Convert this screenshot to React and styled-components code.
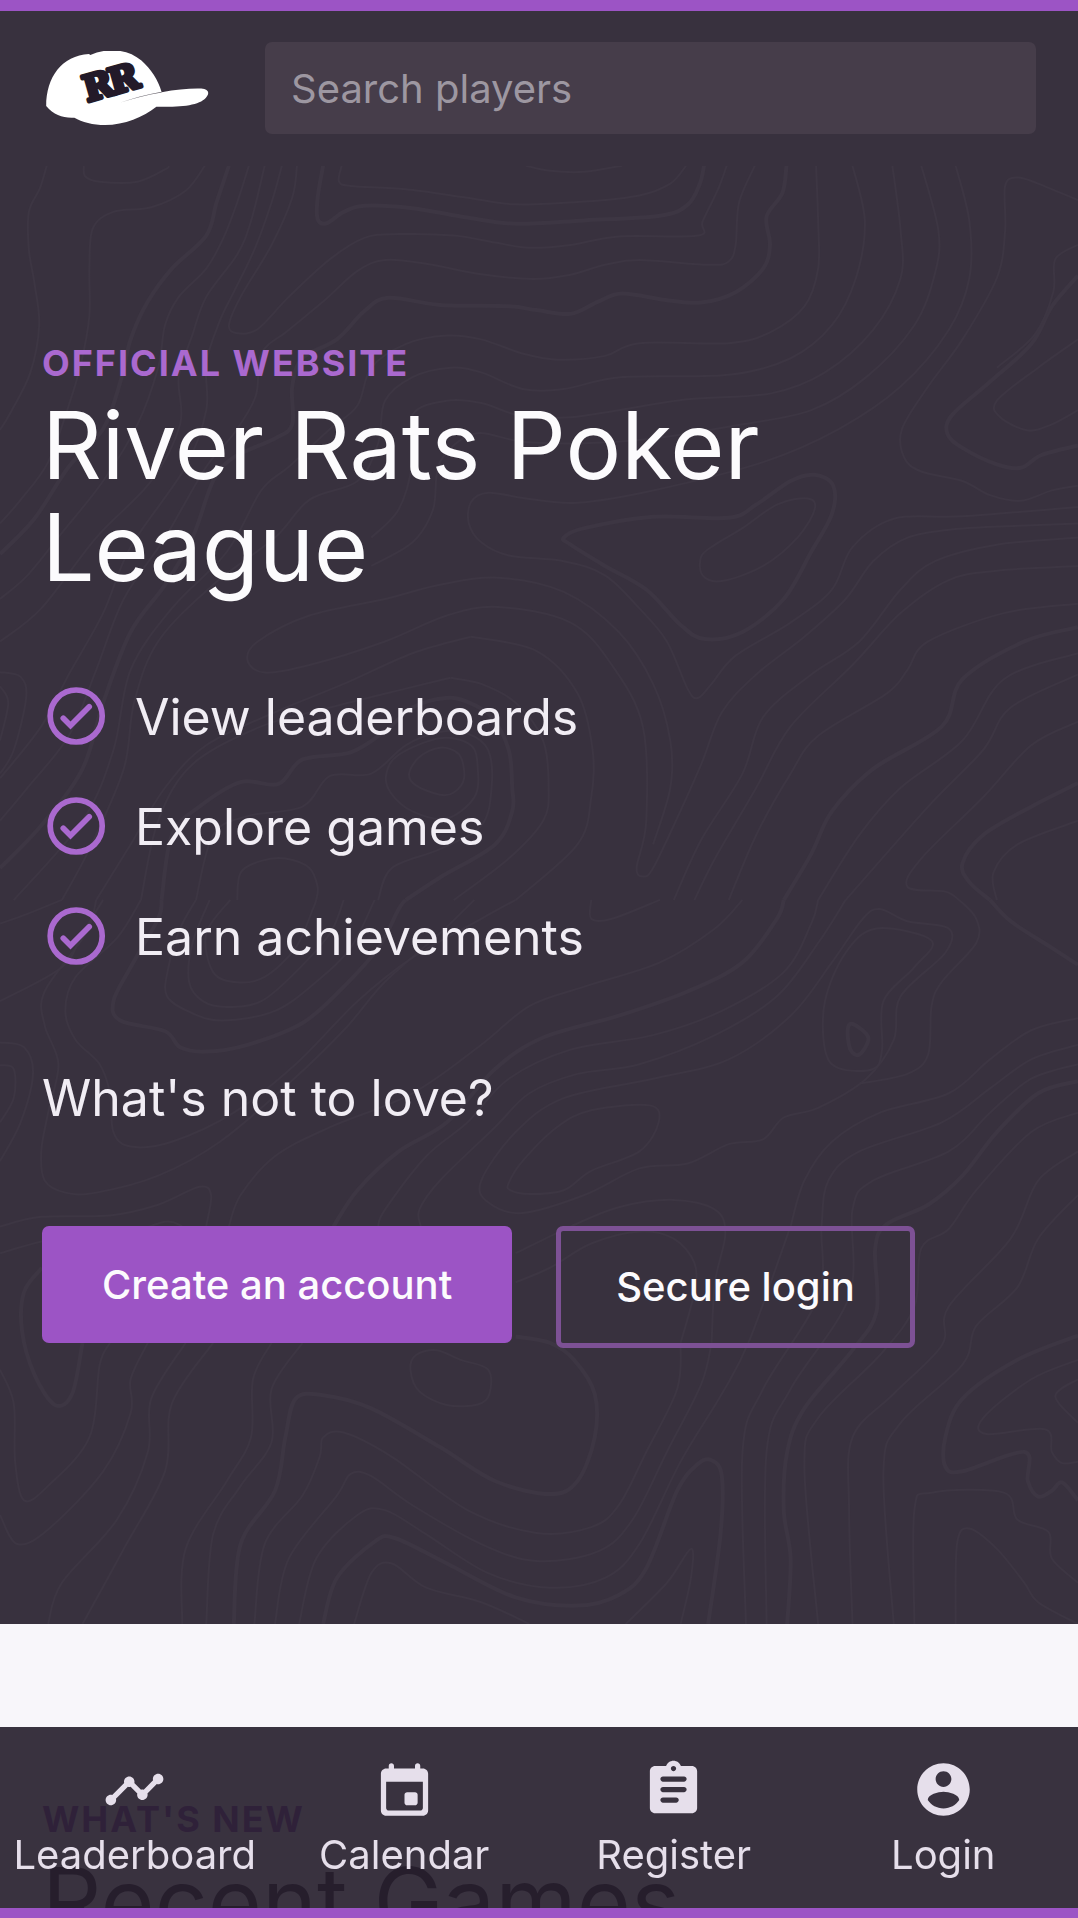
import React from "react";
import styled, { createGlobalStyle } from "styled-components";

const color = {
  ink: "#38313e",
  line: "#3d3643",
  accent: "#9c54c5",
  accentSoft: "#aa69cf",
  outline: "#7d5195",
  field: "#463d4a",
  paper: "#f8f6fa",
};

const GlobalStyle = createGlobalStyle`
  *, *::before, *::after { box-sizing: border-box; }
  body { margin: 0; background: ${color.ink}; }
  h1, h2, p, ul { margin: 0; padding: 0; font-weight: 400; }
  a { color: inherit; text-decoration: none; }
`;

const Shell = styled.div`
  height: 100vh;
  overflow-y: auto;
  scrollbar-width: none;
  border-top: 11px solid ${color.accent};
  background: ${color.ink};
  color: #fcfbfd;
  font-family: Inter, Roboto, sans-serif;
  font-size: 40px;
  line-height: 50px;
`;

const Header = styled.header`
  display: flex;
  align-items: center;
  gap: 56px;
  padding: 31px 42px 32px;
`;

const LogoLink = styled.a`
  display: block;
  flex: none;
  padding-left: 4px;
  svg { display: block; }
`;

const SearchForm = styled.form`
  flex: 1;
  min-width: 0;
`;

const SearchInput = styled.input`
  display: block;
  width: 100%;
  height: 92px;
  padding: 0 26px;
  border: 0;
  border-radius: 7px;
  background: ${color.field};
  color: #fcfbfd;
  font: inherit;
  &::placeholder { color: #9d97a1; opacity: 1; }
`;

const Hero = styled.section`
  position: relative;
  padding: 166px 42px 276px;
`;

const Contours = styled.svg`
  position: absolute;
  inset: 0;
  width: 100%;
  height: 100%;
  fill: none;
  stroke: ${color.line};
`;

const HeroBody = styled.div`
  position: relative;
  display: flex;
  flex-direction: column;
  align-items: flex-start;
  gap: 94px;
  color: #f1edf4;
`;

const Intro = styled.div`
  display: flex;
  flex-direction: column;
  gap: 85px;
`;

const Eyebrow = styled.p`
  color: ${(p) => p.$tone};
  font-size: 36px;
  font-weight: 700;
  line-height: 62px;
  letter-spacing: 2px;
  text-transform: uppercase;
`;

const Title = styled.h1`
  color: ${(p) => p.$tone};
  font-size: 93px;
  line-height: 102px;
`;

const Perks = styled.ul`
  display: flex;
  flex-direction: column;
  gap: 42px;
  list-style: none;
`;

const Perk = styled.li`
  display: flex;
  align-items: center;
  gap: 25px;
  font-size: 50px;
  line-height: 68px;
  svg { flex: none; }
`;

const Lead = styled.p`
  font-size: 50px;
  line-height: 67px;
`;

const Actions = styled.div`
  display: flex;
  align-items: flex-start;
  gap: 44px;
`;

const Button = styled.button`
  padding: ${(p) => (p.$outlined ? "31px 55px" : "34px 60px 33px")};
  border: ${(p) => (p.$outlined ? `5px solid ${color.outline}` : "0")};
  border-radius: 7px;
  background: ${(p) => (p.$outlined ? "transparent" : color.accent)};
  color: #fcfbfd;
  font: inherit;
  font-weight: 500;
  white-space: nowrap;
`;

const News = styled.section`
  padding: 164px 42px;
  background: ${color.paper};
`;

const Nav = styled.nav`
  position: fixed;
  inset: auto 0 0;
  display: grid;
  grid-template-columns: repeat(4, 1fr);
  border-bottom: 10px solid ${color.accent};
  background: rgba(38, 31, 45, 0.915);
  background-clip: padding-box;
  color: #e6dfeb;
`;

const NavLink = styled.a`
  display: flex;
  flex-direction: column;
  align-items: center;
  gap: 9px;
  padding: 31px 0 28px;
`;

/* Each contour is a list of x,y pairs; "!" in front marks a heavy index line,
   "o" at the end closes the ring. */
const upperContours = `
68,12 58,60 42,110 42,190 50,260 57,350 44,451 15,536 0,572
122,12 124,35 145,46 200,46 240,20 246,12
298,12 270,65 220,100 165,110 135,145 130,230 130,330 118,430 100,520 70,640 30,720 0,770
!333,12 315,90 300,160 250,230 215,300 190,380 175,470 150,570 100,650 50,760 0,835
362,12 345,90 325,165 300,230 260,290 240,350 230,440 200,560 150,680 90,790 40,880 0,930
385,12 365,130 345,200 300,290 280,370 260,460 262,560 220,680 140,800 60,950 0,1020
410,12 395,90 370,190 340,280 320,340 300,430 300,530 270,650 190,820 150,960 100,1090 60,1200 0,1310
432,12 425,80 395,180 350,290 333,350 345,367 375,358 420,290 480,210 530,165 580,157 660,160 720,175 770,186 830,180 900,162 1015,160 1022,130 1045,60 1057,12
!470,12 462,80 462,125 475,134 500,110 530,97 600,102 680,122 750,135 850,128 960,118 1000,95 1018,50 1024,12
497,12 493,45 510,55 590,62 680,80 750,94 850,88 930,75 975,50 998,12
765,12 800,23 850,25 905,12
1098,12 1075,90 1070,180 1060,215 1030,222 930,212 880,222 830,243 775,252 700,242 620,220 560,212 520,235 470,300 420,360 380,410 372,500 340,580 300,650 240,800 180,930 140,1080 100,1220 40,1330 0,1400
!1144,12 1138,70 1115,120 1120,180 1110,230 1070,280 1020,302 970,297 905,283 870,300 830,326 780,318 740,310 640,307 565,292 530,320 490,380 440,420 425,480 425,560 400,590 340,630 310,680 280,800 240,900 190,1000 150,1150 120,1290 60,1410 0,1500
1187,12 1190,130 1190,230 1170,310 1120,365 1060,388 930,388 880,415 810,423 760,410 700,380 650,372 590,390 540,440 520,520 480,570 420,650 380,700 330,830 250,950 190,1080 165,1250 120,1400 20,1568
1240,12 1258,130 1245,250 1210,350 1150,420 1060,455 905,460 820,485 760,485 700,450 655,440 600,460 560,510 550,600 520,680 450,720 400,800 310,900 230,1020 195,1150 180,1290 130,1460 90,1568
1298,12 1310,150 1310,250 1270,360 1200,450 1120,495 1000,507 900,530 830,545 760,543 700,515 650,510 600,540 600,640 580,740 540,800
1340,12 1365,150 1360,240 1330,350 1260,460 1180,530 1080,560 950,590 850,600 760,597 690,580 640,640 630,740 600,810 540,860
1390,12 1410,130 1410,250 1380,360 1310,480 1220,570 1110,640 950,700 840,726 770,718 710,705 685,725 682,770 700,810 740,838 820,850 880,880 930,950 970,1020 1000,1120 1015,1140 1035,1110 1070,1050 1150,980 1210,910 1240,820 1300,760 1400,755 1568,735
!820,800 850,780 950,756 1060,758 1100,730 1150,680 1185,667 1212,690 1210,750 1180,830 1140,930 1080,1000 1025,1015 990,985 940,910 880,860 830,815 o
1020,840 1040,815 1080,780 1130,730 1175,717 1185,740 1160,800 1110,860 1050,892 1022,880 o
1568,85 1510,50 1480,37 1462,55 1462,150 1450,250 1400,380 1350,480 1312,570 1315,630 1340,660 1400,680 1440,710 1485,722 1530,700 1568,690
!1568,245 1530,310 1500,390 1440,470 1385,540 1378,580 1400,610 1450,645 1485,652 1515,625 1568,605
1568,180 1535,210 1532,280 1505,370 1450,440
1568,380 1510,440 1450,510 1455,545 1495,573 1530,560 1568,530
1568,770 1480,775 1390,782 1320,800 1270,850 1230,930 1170,1010 1100,1090 1050,1170 1020,1280 980,1410 950,1500 937,1518 926,1500 940,1400 935,1200 890,1070 830,980 725,947 650,965 560,1020 450,1070 385,1086 360,1060 375,1020 450,965 560,930 640,900 725,885 820,915 900,1000 950,1110 975,1230 975,1330 950,1450
685,1010 600,1045 500,1110 400,1170 300,1240 240,1330 190,1450 140,1568
685,1010 780,1040 840,1130 862,1250 860,1350 840,1450 750,1568
655,1097 590,1120 480,1160 380,1200 280,1280 230,1400 205,1568
655,1097 700,1110 750,1150 790,1230 798,1330 790,1400 740,1480 660,1568
!590,1568 640,1520 720,1450 745,1380 745,1330 740,1250 715,1180 680,1148 648,1140 600,1160 560,1210 510,1255 440,1270 405,1322 350,1318 290,1370 250,1430 235,1568
550,1568 570,1500 640,1460 700,1410 715,1330 710,1250 680,1215 640,1212 590,1240 540,1300 480,1305 440,1370 360,1390 310,1430 285,1568
595,1300 610,1265 640,1245 668,1260 675,1310 660,1340 640,1345 605,1325 o
562,1300 580,1260 640,1225 685,1240 695,1290 690,1350 650,1395 600,1380 568,1340 o
345,1568 350,1510 380,1485 415,1480 450,1500 462,1540 460,1568
0,1085 30,1095 38,1140 20,1250 0,1300
0,1115 12,1150 0,1230
1568,800 1450,815 1360,850 1310,910 1250,1020 1180,1090 1110,1180 1080,1300 1020,1440 980,1568
1568,860 1450,870 1380,890 1310,960 1240,1070 1150,1200 1100,1330 1040,1480 1010,1568
1568,940 1460,960 1350,1020 1320,1080 1290,1130 1190,1220 1150,1300 1100,1430 1060,1568
!1568,990 1490,1020 1400,1100 1370,1200 1270,1290 1210,1380 1180,1470 1140,1568
1568,1045 1460,1100 1400,1230 1310,1330 1250,1430 1190,1568
1568,1090 1470,1160 1430,1250 1350,1370 1230,1568
!1568,1320 1500,1370 1430,1430 1400,1490 1410,1530 1440,1568
1568,1400 1480,1450 1445,1510 1450,1568
1568,1190 1500,1240 1430,1350 1340,1480 1320,1540 1375,1550 1395,1568`;

const lowerContours = `
!235,41 230,80 190,180 165,250 175,290 240,312 262,345 300,354 360,340 440,295 500,220 550,140 580,60 590,41
285,41 262,100 245,180 243,240 280,275 325,290 400,270 460,210 510,140 545,41
305,41 280,130 275,210 295,250 330,262 380,250 430,190 480,110 500,41
335,41 300,110 310,190 345,211 385,200 430,140 455,60 460,41
140,41 125,110 65,230 65,300 85,380 70,480 60,560 65,620 95,645 140,645 230,610 320,540 420,420 500,310 560,210 640,110 690,41
205,41 170,120 110,200 95,270 110,330 145,380 160,440 165,520 190,550 250,540 340,480 430,380 520,250 600,160 700,80 750,41
0,250 90,180 120,110 150,41
0,90 40,70 90,41
0,335 35,345 48,400 30,500 0,580
0,382 20,390 20,450 0,500
!1140,41 1130,80 1080,170 1000,230 900,280 790,325 720,390 650,500 580,560 520,640 485,715
1080,41 1040,100 960,170 850,220 770,260 700,340 600,440 480,510 400,570 350,650 333,714
1190,41 1180,90 1140,190 1050,270 950,320 830,350 740,410 680,500 620,570 560,680 550,714
1230,41 1190,130 1130,240 1040,320 930,380 840,400 770,440 720,510 640,620 610,680 612,714
740,625 760,580 810,510 860,475 945,465 958,500 930,560 860,600 820,640 770,648 742,640 o
1280,60 1320,85 1380,100 1375,150 1310,240 1300,330 1260,410 1190,470 1140,490 1110,535 1060,545 1000,585 930,595 850,650 760,687 710,665 700,620 750,520 820,450 950,410 1060,370 1150,280 1210,170 1255,80 o
1275,100 1355,125 1330,180 1285,250 1283,350 1270,390 1220,388 1200,350 1200,250 1230,150 o
!1233,310 1240,297 1263,325 1250,360 1237,350 o
0,715 60,695 160,692 230,670 290,633 307,650 300,714
0,770 80,740 180,730 240,705 265,714
!61,800 35,850 32,930 50,1020 80,1083 105,1060 120,955
0,1010 20,1080 22,1200 35,1280 70,1250 130,1150 145,1000 160,955
0,1310 25,1370 70,1340 150,1220 190,1100 190,1030 215,955
70,1535 90,1450 170,1320 215,1180 220,1070 270,955
120,1535 180,1380 240,1220 250,1080 310,955
265,1535 270,1380 330,1240 365,1150 368,1030 395,955
300,1535 310,1350 350,1250 395,1160 395,1050 440,955
!340,1535 350,1370 400,1260 415,1150 430,1070 470,1063 540,1090 640,1170 720,1240 800,1267 840,1240 865,1150 865,1060 835,990 800,955 750,942
370,1535 385,1370 440,1270 465,1190 470,1150 500,1140 570,1190 680,1300 780,1347 860,1335 900,1290 940,1180 985,1050 990,955
400,1535 420,1400 490,1270 510,1225 540,1230 600,1290 700,1370 780,1405 870,1385 920,1320 970,1180 1020,1040 1035,955
435,1535 460,1400 520,1310 560,1300 620,1350 710,1430 800,1460 880,1440 930,1370 990,1200 1050,1060 1090,950 1150,714
!470,1535 490,1440 545,1365 575,1358 650,1410 750,1480 840,1497 900,1475 940,1420 985,1260 1015,1205 1035,1197 1050,1230 1048,1350 1030,1535
515,1535 540,1430 570,1410 620,1460 700,1490 770,1535
910,1535 970,1450 1005,1380 1005,1440 990,1535
597,1010 605,980 635,970 670,990 710,1010 712,1060 695,1082 650,1083 610,1055 o
750,830 800,800 860,750 930,725 980,740 1010,790 1010,850 990,955
750,770 830,715 900,675 980,660 1040,680 1055,730 1040,830 1035,955
!1568,415 1510,440 1450,520 1400,610 1350,670 1290,710 1273,760 1275,890 1240,970 1170,1090 1145,1180 1140,1300 1150,1400 1145,1535
1568,285 1500,310 1440,370 1380,440 1280,480 1210,540 1170,620 1150,714
1568,340 1500,370 1440,430 1370,500 1250,560 1205,620 1195,714 1190,860 1110,1050 1080,1180 1085,1535
1568,380 1500,410 1440,480 1380,560 1270,620 1240,680 1235,860 1150,1050 1115,1180 1115,1535
1568,480 1500,520 1420,640 1380,720 1340,760 1330,880 1280,980 1190,1110 1170,1210 1190,1535
1568,560 1510,620 1470,740 1380,880 1370,960 1300,1060 1240,1150 1235,1300 1240,1535
1568,650 1510,740 1480,840 1420,920 1400,1000 1310,1120 1285,1220 1300,1535
!1568,940 1480,990 1400,1070 1375,1150 1375,1210 1400,1220 1490,1180 1495,1240 1510,1272 1530,1260 1545,1243 1568,1280
1568,990 1500,1030 1430,1110 1435,1143 1520,1133 1530,1180 1545,1203 1568,1200
1568,1030 1535,1065 1568,1120
1330,1535 1330,1300 1355,1264 1460,1264 1480,1320 1525,1345 1530,1400 1568,1450
1390,1535 1392,1370 1410,1338 1450,1380 1490,1450 1510,1490 1568,1535
!1440,41 1470,85 1530,140 1568,175
1395,41 1420,80 1420,130 1370,210 1355,260 1350,360 1320,400 1250,420
860,41 860,80 890,80 960,41`;

/* Catmull-Rom spline through the points of one contour. */
function toContour(row) {
  const heavy = row.startsWith("!");
  const closed = row.endsWith("o");
  const pts = row
    .replace(/[!o]/g, "")
    .trim()
    .split(" ")
    .map((pair) => pair.split(",").map(Number));
  const n = pts.length;
  const at = (i) => (closed ? pts[(i + n) % n] : pts[Math.max(0, Math.min(n - 1, i))]);
  let d = `M${pts[0]}`;
  for (let i = 0; i < (closed ? n : n - 1); i += 1) {
    const [a, b, c, e] = [at(i - 1), at(i), at(i + 1), at(i + 2)];
    const c1 = [b[0] + (c[0] - a[0]) / 6, b[1] + (c[1] - a[1]) / 6];
    const c2 = [c[0] - (e[0] - b[0]) / 6, c[1] - (e[1] - b[1]) / 6];
    d += `C${c1} ${c2} ${c}`;
  }
  return { d, width: heavy ? 4 : 2 };
}

const parse = (rows) => rows.trim().split("\n").map(toContour);
const contourLayers = [
  { transform: "translate(0 -6) scale(.6875 .472)", lines: parse(upperContours) },
  { transform: "translate(0 714) scale(.6875 .4847)", lines: parse(lowerContours) },
];

function ContourMap() {
  return (
    <Contours viewBox="0 0 1078 1458" preserveAspectRatio="xMidYMid slice" aria-hidden="true">
      {contourLayers.map((layer) => (
        <g key={layer.transform} transform={layer.transform}>
          {layer.lines.map((line) => (
            <path key={line.d} d={line.d} strokeWidth={line.width} vectorEffect="non-scaling-stroke" />
          ))}
        </g>
      ))}
    </Contours>
  );
}

function CapLogo() {
  return (
    <svg width="163" height="75" viewBox="48 31 490 226" aria-hidden="true">
      <path
        fill="#fff"
        d="M48 197C48 110 95 45 177 40L181 43C232 20 295 25 335 60C365 87 385 118 396 155C440 147 480 143 515 144C536 146 541 156 532 168C515 194 460 201 380 199C340 230 285 254 225 254C190 254 155 245 133 232C100 234 72 225 48 197Z"
      />
      <path fill="#625d66" d="M270 187C310 173 350 163 396 154L396 156C350 164 310 174 270 187Z" />
      <text
        transform="translate(172 185) rotate(-16)"
        fontFamily="DejaVu Serif, serif"
        fontWeight="700"
        fontSize="108"
        letterSpacing="-10"
        fill="#231a29"
        stroke="#231a29"
        strokeWidth="12"
        strokeLinejoin="round"
      >
        RR
      </text>
    </svg>
  );
}

function CheckIcon() {
  return (
    <svg width="68" height="68" viewBox="0 0 68 68" fill="none" stroke={color.accentSoft} strokeWidth="5.7" aria-hidden="true">
      <circle cx="34.2" cy="33" r="26" />
      <path d="M21.3 35.3L28.5 42.5L47.2 23.8" strokeLinecap="round" />
    </svg>
  );
}

const perks = ["View leaderboards", "Explore games", "Earn achievements"];

const navItems = [
  {
    label: "Leaderboard",
    path: "M23 8c0 1.1-.9 2-2 2-.18 0-.35-.02-.51-.07l-3.56 3.55c.05.16.07.34.07.52 0 1.1-.9 2-2 2s-2-.9-2-2c0-.18.02-.36.07-.52l-2.55-2.55c-.16.05-.34.07-.52.07s-.36-.02-.52-.07l-4.55 4.56c.05.16.07.33.07.51 0 1.1-.9 2-2 2s-2-.9-2-2 .9-2 2-2c.18 0 .35.02.51.07l4.56-4.55C8.02 9.36 8 9.18 8 9c0-1.1.9-2 2-2s2 .9 2 2c0 .18-.02.36-.07.52l2.55 2.55c.16-.05.34-.07.52-.07s.36.02.52.07l3.55-3.56C19.02 8.35 19 8.18 19 8c0-1.1.9-2 2-2s2 .9 2 2z",
  },
  {
    label: "Calendar",
    path: "M16 13h-3c-.55 0-1 .45-1 1v3c0 .55.45 1 1 1h3c.55 0 1-.45 1-1v-3c0-.55-.45-1-1-1zm0-10v1H8V3c0-.55-.45-1-1-1s-1 .45-1 1v1H5c-1.11 0-1.99.9-1.99 2L3 20c0 1.1.89 2 2 2h14c1.1 0 2-.9 2-2V6c0-1.1-.9-2-2-2h-1V3c0-.55-.45-1-1-1s-1 .45-1 1zm2 17H6c-.55 0-1-.45-1-1V9h14v10c0 .55-.45 1-1 1z",
  },
  {
    label: "Register",
    path: "M19 3h-4.18C14.4 1.84 13.3 1 12 1s-2.4.84-2.82 2H5c-1.1 0-2 .9-2 2v14c0 1.1.9 2 2 2h14c1.1 0 2-.9 2-2V5c0-1.1-.9-2-2-2zm-7 0c.55 0 1 .45 1 1s-.45 1-1 1-1-.45-1-1 .45-1 1-1zm1 14H8c-.55 0-1-.45-1-1s.45-1 1-1h5c.55 0 1 .45 1 1s-.45 1-1 1zm3-4H8c-.55 0-1-.45-1-1s.45-1 1-1h8c.55 0 1 .45 1 1s-.45 1-1 1zm0-4H8c-.55 0-1-.45-1-1s.45-1 1-1h8c.55 0 1 .45 1 1s-.45 1-1 1z",
  },
  {
    label: "Login",
    path: "M12 2C6.48 2 2 6.48 2 12s4.48 10 10 10 10-4.48 10-10S17.52 2 12 2zm0 3c1.66 0 3 1.34 3 3s-1.34 3-3 3-3-1.34-3-3 1.34-3 3-3zm0 14.2c-2.5 0-4.71-1.28-6-3.22.03-1.99 4-3.08 6-3.08 1.99 0 5.97 1.09 6 3.08-1.29 1.94-3.5 3.22-6 3.22z",
  },
];

export default function App() {
  return (
    <>
      <GlobalStyle />
      <Shell>
        <Header>
          <LogoLink href="#home" aria-label="River Rats home">
            <CapLogo />
          </LogoLink>
          <SearchForm role="search">
            <SearchInput type="search" aria-label="Search players" placeholder="Search players" />
          </SearchForm>
        </Header>
        <main>
          <Hero>
            <ContourMap />
            <HeroBody>
              <Intro>
                <div>
                  <Eyebrow $tone={color.accentSoft}>Official website</Eyebrow>
                  <Title $tone="#fcfbfd">River Rats Poker League</Title>
                </div>
                <Perks>
                  {perks.map((perk) => (
                    <Perk key={perk}>
                      <CheckIcon />
                      {perk}
                    </Perk>
                  ))}
                </Perks>
              </Intro>
              <Lead>What's not to love?</Lead>
              <Actions>
                <Button type="button">Create an account</Button>
                <Button type="button" $outlined>Secure login</Button>
              </Actions>
            </HeroBody>
          </Hero>
          <News>
            <Eyebrow $tone="#8a3ab8">What's new</Eyebrow>
            <Title as="h2" $tone="#251b2c">Recent Games</Title>
          </News>
        </main>
        <Nav aria-label="Main">
          {navItems.map((item) => (
            <NavLink key={item.label} href={`#${item.label.toLowerCase()}`}>
              <svg width="63" height="63" viewBox="0 0 24 24" fill="currentColor" aria-hidden="true">
                <path d={item.path} />
              </svg>
              {item.label}
            </NavLink>
          ))}
        </Nav>
      </Shell>
    </>
  );
}
